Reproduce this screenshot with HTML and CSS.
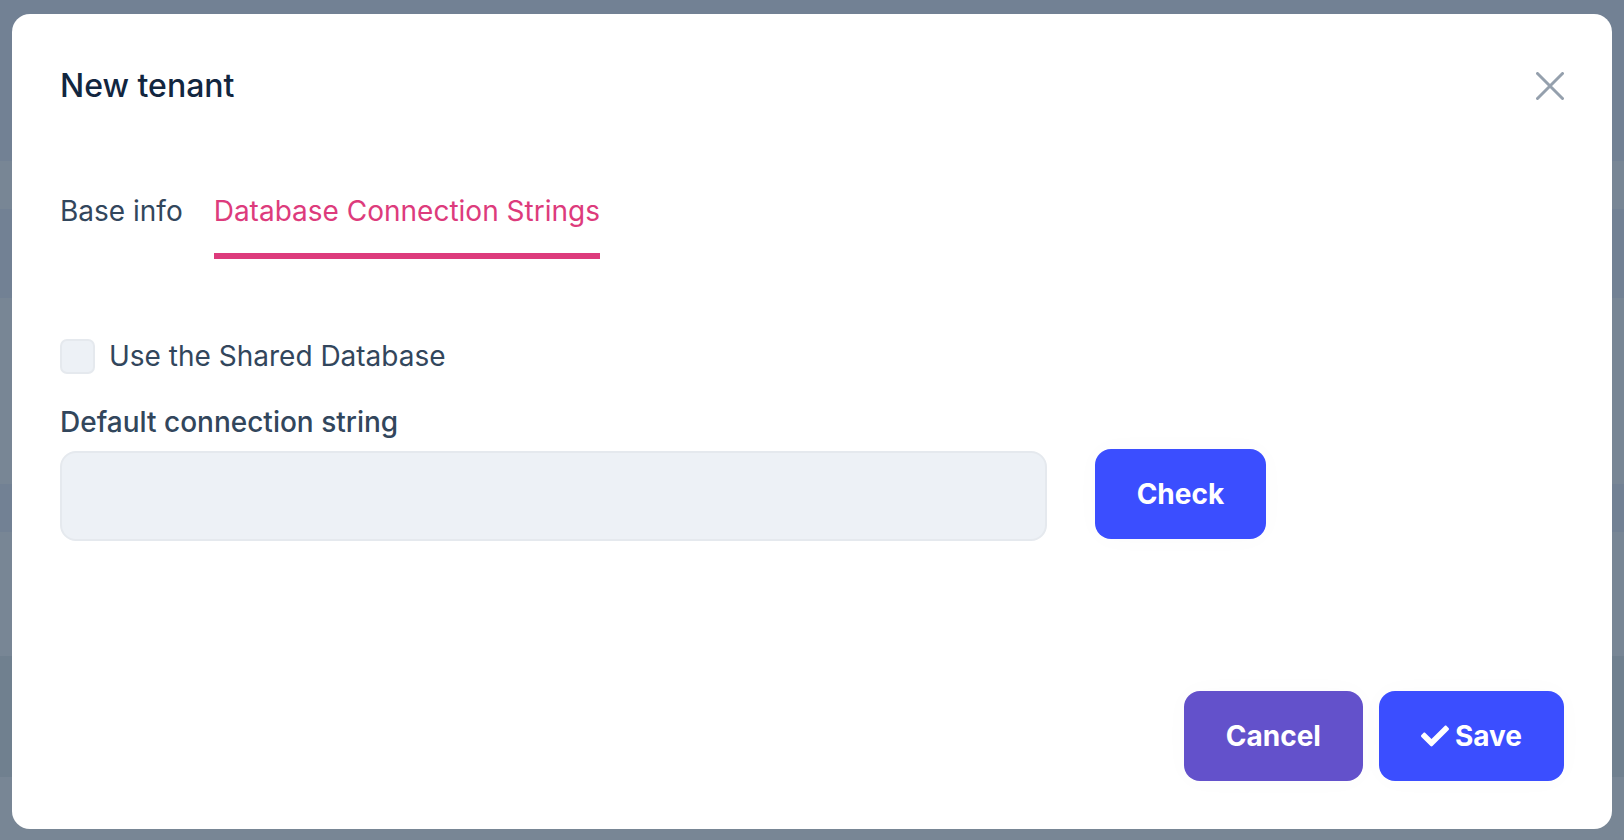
FILE: index.html
```html
<!DOCTYPE html>
<html lang="en">
<head>
<meta charset="utf-8">
<meta name="viewport" content="width=device-width, initial-scale=1">
<title>New tenant</title>
<link rel="stylesheet" href="styles.css">
</head>
<body>
<div class="backdrop">
  <section class="modal" role="dialog" aria-modal="true" aria-labelledby="modal-title">
    <header class="modal-header">
      <h1 class="modal-title" id="modal-title">New tenant</h1>
      <button class="close" type="button" aria-label="Close">
        <svg class="close-icon" viewBox="0 0 28 28" fill="none" stroke="currentColor" stroke-width="3" stroke-linecap="round"><path d="M1.500 1.500l25 25M26.500 1.500l-25 25"/></svg>
      </button>
    </header>
    <form class="modal-form">
      <div class="tabs" role="tablist">
        <button class="tab" type="button" role="tab" aria-selected="false">Base info</button>
        <button class="tab tab-active" type="button" role="tab" aria-selected="true">Database Connection Strings</button>
      </div>
      <div class="check-row">
        <input class="checkbox" type="checkbox" id="shared">
        <label for="shared">Use the Shared Database</label>
      </div>
      <label class="field-label" for="connection">Default connection string</label>
      <div class="field-row">
        <input class="text-input" type="text" id="connection">
        <button class="btn btn-primary btn-check" type="button">Check</button>
      </div>
      <footer class="modal-footer">
        <button class="btn btn-secondary" type="button">Cancel</button>
        <button class="btn btn-primary" type="submit"><svg class="check-icon" viewBox="0 0 512 512" fill="currentColor"><path d="M173.898 439.404l-166.400-166.400c-9.997-9.997-9.997-26.206 0-36.204l36.203-36.204c9.997-9.998 26.207-9.998 36.204 0L192 312.690 432.095 72.596c9.997-9.997 26.207-9.997 36.204 0l36.203 36.204c9.997 9.997 9.997 26.206 0 36.204l-294.400 294.401c-9.998 9.997-26.207 9.997-36.204-.001z"/></svg>Save</button>
      </footer>
    </form>
  </section>
</div>
</body>
</html>
```
FILE: styles.css
```css
* {
  box-sizing: border-box;
}

body {
  margin: 0;
  font-family: Inter, "Liberation Sans", sans-serif;
  font-size: 28px;
  line-height: 42px;
  color: #32465c;
}

button,
input {
  font: inherit;
  color: inherit;
}

.backdrop {
  min-height: 100vh;
  padding: 14px 12px 11px;
  background: linear-gradient(
    #728194 161px,
    #788695 161px 209px,
    #728194 209px 298px,
    #788695 298px 484px,
    #728194 484px 532px,
    #788695 532px 656px,
    #70808f 656px 777px,
    #788695 777px
  );
}

.modal {
  padding: 48px;
  border-radius: 18px;
  background: #fff;
}

.modal-header {
  display: flex;
  align-items: center;
  justify-content: space-between;
}

.modal-title {
  margin: 0;
  font-size: 32px;
  font-weight: 500;
  line-height: 48px;
  color: #12263f;
}

.close {
  display: flex;
  padding: 0;
  border: 0;
  background: none;
  color: #95a0ad;
}

.close-icon {
  width: 28px;
  height: 28px;
}

.tabs {
  display: flex;
  gap: 31px;
  margin-top: 80px;
}

.tab {
  padding: 0 0 21px;
  border: 0;
  border-bottom: 6px solid transparent;
  background: none;
}

.tab-active {
  border-bottom-color: #dd3b7c;
  color: #dd3b7c;
}

.check-row {
  display: flex;
  align-items: center;
  gap: 14px;
  margin-top: 76px;
}

.checkbox {
  appearance: none;
  width: 35px;
  height: 35px;
  margin: 0;
  border: 2px solid #e5e9ee;
  border-radius: 7px;
  background: #edf1f6;
}

.checkbox:checked {
  background: #3b4eff;
}

.field-label {
  display: block;
  margin-top: 24px;
  font-weight: 500;
}

.field-row {
  display: grid;
  grid-template-columns: repeat(12, 1fr);
  column-gap: 48px;
  align-items: start;
  margin-top: 6px;
}

.text-input {
  grid-column: span 8;
  min-width: 0;
  height: 90px;
  margin-top: 2px;
  padding: 0 28px;
  border: 2px solid #e5e9ee;
  border-radius: 16px;
  background: #edf1f6;
}

.btn {
  display: flex;
  align-items: center;
  gap: 6px;
  padding: 24px 42px;
  border: 0;
  border-radius: 16px;
  font-weight: 700;
  color: #fff;
  box-shadow: 0 0 28px rgba(30, 40, 90, 0.02);
}

.btn-primary {
  background: #3b4eff;
}

.btn-secondary {
  background: #6351cb;
}

.btn-check {
  grid-column: span 4;
  justify-self: start;
}

.check-icon {
  width: 28px;
  height: 28px;
}

.modal-footer {
  display: flex;
  justify-content: flex-end;
  gap: 16px;
  margin-top: 150px;
}
```
